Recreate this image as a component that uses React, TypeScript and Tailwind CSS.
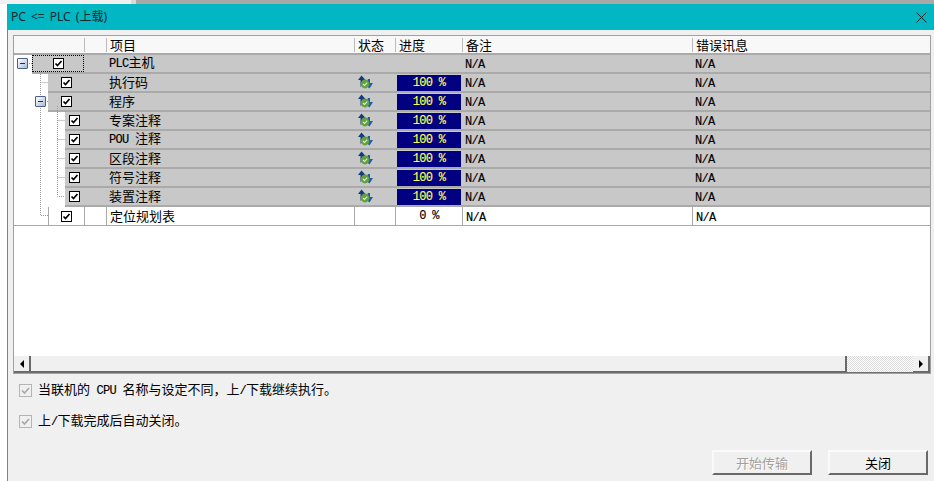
const sans = "font-['Noto_Sans_CJK_SC','Noto_Sans',sans-serif]"

function Latin({ children }: { children: React.ReactNode }) {
  return <span className="whitespace-pre font-['Liberation_Mono',monospace] text-[12px] tracking-[-0.7px] [-webkit-text-stroke:0.15px_currentColor]">{children}</span>
}

function Check() {
  return (
    <span className="flex h-[11px] w-[11px] items-center justify-center border border-black bg-white">
      <svg width="9" height="9" viewBox="0 0 9 9">
        <path d="M1.5 4.5 L3.5 6.5 L7.5 2" fill="none" stroke="#000" strokeWidth="1.7" />
      </svg>
    </span>
  )
}

function DisabledCheck() {
  return (
    <span className="flex h-[13px] w-[13px] items-center justify-center border border-[#b4b4b4] bg-[#f0f0f0]">
      <svg width="11" height="11" viewBox="0 0 11 11">
        <path d="M2 5.5 L4.5 8 L9 3" fill="none" stroke="#a8a8a8" strokeWidth="1.7" />
      </svg>
    </span>
  )
}

function StatusIcon() {
  return (
    <svg width="15" height="15" viewBox="0 0 15 15">
      <path d="M2.5 12 V5 H0 L3.5 0.5 L7.5 5 H5.5 V8 Z" fill="#123a7c" />
      <path d="M10 4 H12 V8 H15 L11.5 13.5 L7.5 10 Z" fill="#1f5cab" />
      <circle cx="7" cy="9" r="4.4" fill="#64a040" />
      <path d="M5 9 L6.5 10.5 L9.2 7.6" fill="none" stroke="#e4f2d8" strokeWidth="1.1" />
    </svg>
  )
}

function Minus() {
  return (
    <span className="absolute flex h-[11px] w-[11px] items-center justify-center rounded-[1px] border border-[#4d6185] bg-gradient-to-br from-white to-[#a9bcdc]">
      <span className="h-px w-[5px] bg-[#1c2f55]" />
    </span>
  )
}

const rows = [
  { name: 'PLC主机', latin: true, spacer: 'w-[18px]', cell: 'w-[52px] outline-1 -outline-offset-1 outline-dotted outline-black', icon: false, pct: '' },
  { name: '执行码', spacer: 'w-[34px]', cell: 'w-[36px]', icon: true, pct: '100 %' },
  { name: '程序', spacer: 'w-[34px]', cell: 'w-[36px]', icon: true, pct: '100 %' },
  { name: '专案注释', spacer: 'w-[51px]', cell: 'w-[19px]', icon: true, pct: '100 %' },
  { name: 'POU 注释', latin: true, spacer: 'w-[51px]', cell: 'w-[19px]', icon: true, pct: '100 %' },
  { name: '区段注释', spacer: 'w-[51px]', cell: 'w-[19px]', icon: true, pct: '100 %' },
  { name: '符号注释', spacer: 'w-[51px]', cell: 'w-[19px]', icon: true, pct: '100 %' },
  { name: '装置注释', spacer: 'w-[51px]', cell: 'w-[19px]', icon: true, pct: '100 %' },
]

function NA() {
  return <Latin>N/A</Latin>
}

function ItemName({ name, latin }: { name: string; latin?: boolean }) {
  if (!latin) return <>{name}</>
  const m = name.match(/^([A-Z]+ ?)(.*)$/)
  return (
    <>
      <Latin>{m ? m[1] : name}</Latin>
      {m ? m[2] : ''}
    </>
  )
}

export default function App() {
  return (
    <div className={`flex h-[481px] w-[934px] flex-col overflow-hidden bg-white text-[13px] leading-[18px] text-black ${sans}`}>
      {/* Window behind */}
      <div className="flex h-[4px] shrink-0">
        <div className="w-[131px] bg-[#f0f0f0]" />
        <div className="w-[5px] bg-[#d8d8d8]" />
        <div className="flex-1 bg-[#a8a8a8]" />
      </div>

      <div className="ml-[7px] flex min-h-0 flex-1 flex-col border-l border-[#00b7c3] bg-[#f0f0f0]">
        {/* Title bar */}
        <div className="flex h-[26px] shrink-0 items-center justify-between bg-[#00b7c3] pl-[3px] pr-[7px]">
          <span className="font-['Noto_Sans','Noto_Sans_CJK_SC',sans-serif] text-[12px] text-[#10282b] [word-spacing:2px]">PC &lt;= PLC (上载)</span>
          <svg width="11" height="11" viewBox="0 0 11 11">
            <path d="M0.5 0.5 L10.5 10.5 M10.5 0.5 L0.5 10.5" stroke="#0a2224" strokeWidth="1" />
          </svg>
        </div>

        <div className="flex min-h-0 flex-1 flex-col pl-[5px] pr-[3px] pt-[5px]">
          {/* Table */}
          <div className="flex h-[339px] shrink-0 flex-col border border-[#a0a0a0] bg-white">
            <div className="flex h-[19px] shrink-0 items-center border-b-2 border-[#aaaaaa] bg-[#f8f8f8]">
              <div className="w-[70px]" />
              <div className="h-[14px] w-[22px] border-l border-[#bbbbbb]" />
              <div className="h-[14px] w-[248px] border-l border-[#bbbbbb] pl-[3px] leading-[14px]">项目</div>
              <div className="h-[14px] w-[41px] border-l border-[#bbbbbb] pl-[3px] leading-[14px]">状态</div>
              <div className="h-[14px] w-[67px] border-l border-[#bbbbbb] pl-[3px] leading-[14px]">进度</div>
              <div className="h-[14px] w-[230px] border-l border-[#bbbbbb] pl-[3px] leading-[14px]">备注</div>
              <div className="h-[14px] flex-1 border-l border-[#bbbbbb] pl-[3px] leading-[14px]">错误讯息</div>
            </div>

            <div className="relative min-h-0 flex-1">
              {/* Tree connectors */}
              <svg className="absolute left-0 top-[-1px]" width="60" height="180" fill="none" stroke="#999" strokeDasharray="1 1">
                <path d="M26.5 18 V161.5 H34 M26.5 28.5 H34 M13 9.5 H18" />
                <path d="M43.5 52 V142.5 H51 M43.5 66.5 H51 M43.5 85.5 H51 M43.5 104.5 H51 M43.5 123.5 H51 M31 47.5 H34" />
              </svg>
              <div className="absolute left-[3px] top-[3px]">
                <Minus />
              </div>
              <div className="absolute left-[21px] top-[41px]">
                <Minus />
              </div>

              {rows.map((r) => (
                <div key={r.name} className="flex h-[19px]">
                  <div className={r.spacer} />
                  <div className="flex flex-1 items-center border-b-2 border-[#aaaaaa] bg-[#c8c8c8]">
                    <div className={`flex h-full items-center justify-center ${r.cell}`}>
                      <Check />
                    </div>
                    <div className="w-[22px]" />
                    <div className="w-[248px] pb-px pl-[3px]">
                      <ItemName name={r.name} latin={r.latin} />
                    </div>
                    <div className="flex w-[41px] justify-start pl-[4px]">{r.icon && <StatusIcon />}</div>
                    <div className="flex h-full w-[67px] items-center pl-[2px] pr-px">
                      {r.pct && (
                        <div className="flex h-[16px] w-full items-center justify-center bg-[#000080] text-[#ffff4d]">
                          <Latin>{r.pct}</Latin>
                        </div>
                      )}
                    </div>
                    <div className="w-[230px] pl-[3px]">
                      <NA />
                    </div>
                    <div className="flex-1 pl-[3px]">
                      <NA />
                    </div>
                  </div>
                </div>
              ))}

              {/* Last row is not transferred */}
              <div className="flex h-[19px] border-b border-[#aaaaaa]">
                <div className="w-[34px]" />
                <div className="flex w-[36px] items-center justify-center border-l border-[#aaaaaa]">
                  <Check />
                </div>
                <div className="w-[22px] border-l border-[#aaaaaa]" />
                <div className="w-[248px] border-l border-[#aaaaaa] pb-px pl-[3px] leading-[17px]">定位规划表</div>
                <div className="w-[41px] border-l border-[#aaaaaa]" />
                <div className="flex w-[67px] items-center justify-center border-l border-[#aaaaaa]">
                  <Latin>0 %</Latin>
                </div>
                <div className="w-[230px] border-l border-[#aaaaaa] pl-[3px]">
                  <NA />
                </div>
                <div className="flex-1 border-l border-[#aaaaaa] pl-[3px]">
                  <NA />
                </div>
              </div>
            </div>

            {/* Scrollbar */}
            <div className="flex h-[17px] shrink-0 border-b border-[#707070] bg-[#f0f0f0]">
              <div className="flex w-[17px] items-center justify-center border-b border-r-2 border-[#696969]">
                <span className="h-0 w-0 border-y-[4px] border-r-[4px] border-y-transparent border-r-black" />
              </div>
              <div className="w-[816px] border-b border-r-2 border-[#696969]" />
              <div className="flex-1 bg-[repeating-conic-gradient(#dcdcdc_0%_25%,#ffffff_0%_50%)] bg-[length:2px_2px]" />
              <div className="flex w-[17px] items-center justify-center border-b border-r-2 border-[#696969]">
                <span className="h-0 w-0 border-y-[4px] border-l-[4px] border-y-transparent border-l-black" />
              </div>
            </div>
          </div>

          {/* Options */}
          <div className="mt-[7px] flex h-[18px] items-center gap-[6px] pl-[6px]">
            <DisabledCheck />
            <span>
              当联机的<Latin> CPU </Latin>名称与设定不同，上<Latin>/</Latin>下载继续执行。
            </span>
          </div>
          <div className="mt-[13px] flex h-[18px] items-center gap-[6px] pl-[6px]">
            <DisabledCheck />
            <span>
              上<Latin>/</Latin>下载完成后自动关闭。
            </span>
          </div>

          {/* Buttons */}
          <div className="mt-[20px] flex justify-end gap-[16px] pr-[3px]">
            <button className="h-[25px] w-[100px] border-2 border-b-[#696969] border-l-[#fafafa] border-r-[#696969] border-t-[#fafafa] text-[#a0a0a0] [text-shadow:1px_1px_0_#fff]">
              开始传输
            </button>
            <button className="h-[25px] w-[100px] border-2 border-b-[#696969] border-l-[#fafafa] border-r-[#696969] border-t-[#fafafa]">
              关闭
            </button>
          </div>
        </div>
      </div>
    </div>
  )
}
